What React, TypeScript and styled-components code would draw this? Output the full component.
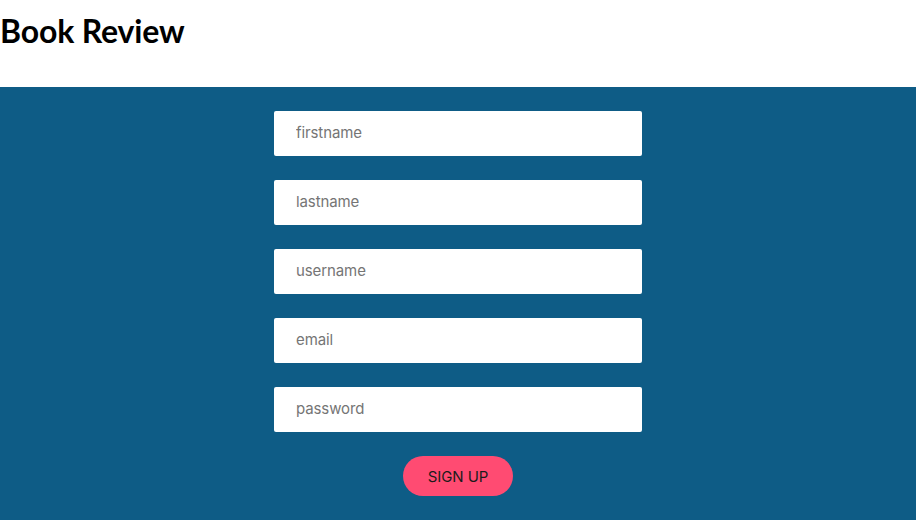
import React from "react";
import styled, { createGlobalStyle } from "styled-components";

const GlobalStyle = createGlobalStyle`
  html, body { margin: 0; padding: 0; background: #ffffff; }
  body { font-family: Inter, "Liberation Sans", sans-serif; }
  * { box-sizing: border-box; }
`;

const Header = styled.header`
  height: 87px;
  padding-top: 12px;
  background: #ffffff;
`;

const Title = styled.h1`
  margin: 0;
  font-family: Lato, "Liberation Sans", sans-serif;
  font-weight: 700;
  font-size: 32px;
  line-height: 38px;
  color: #000000;
  letter-spacing: -0.15px;
`;

const Band = styled.main`
  background: #0e5c86;
  min-height: 433px;
  padding-top: 24px;
  display: flex;
  justify-content: center;
`;

const Form = styled.form`
  width: 368px;
  display: flex;
  flex-direction: column;
  align-items: center;
  gap: 24px;
`;

const Field = styled.input`
  width: 100%;
  height: 45px;
  border: none;
  border-radius: 2px;
  background: #ffffff;
  padding: 0 22px 3px;
  font-family: Inter, "Liberation Sans", sans-serif;
  font-size: 15px;
  letter-spacing: -0.1px;
  color: #333;
  outline: none;
  &::placeholder { color: #757575; }
`;

const Button = styled.button`
  width: 110px;
  height: 40px;
  border: none;
  border-radius: 20px;
  background: #ff4b72;
  color: #1b1b1b;
  font-family: Inter, "Liberation Sans", sans-serif;
  font-size: 15px;
  letter-spacing: -0.1px;
  padding: 0;
  cursor: pointer;
`;

const fields = [
  { name: "firstname", type: "text" },
  { name: "lastname", type: "text" },
  { name: "username", type: "text" },
  { name: "email", type: "email" },
  { name: "password", type: "password" },
];

export default function App() {
  return (
    <>
      <GlobalStyle />
      <Header>
        <Title>Book Review</Title>
      </Header>
      <Band>
        <Form onSubmit={(e) => e.preventDefault()}>
          {fields.map((f) => (
            <Field key={f.name} name={f.name} type={f.type} placeholder={f.name} />
          ))}
          <Button type="submit">SIGN UP</Button>
        </Form>
      </Band>
    </>
  );
}
